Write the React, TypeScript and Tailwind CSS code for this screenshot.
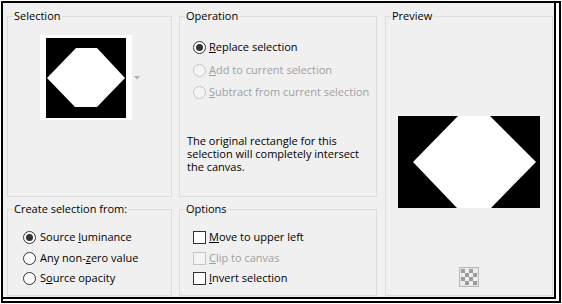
import React from "react";

function Group({
  label,
  className,
  children,
}: {
  label: string;
  className: string;
  children?: React.ReactNode;
}) {
  return (
    <div className={"relative border border-[#dcdcdc] " + className}>
      <span className="absolute left-[5px] top-[-8px] px-[1px] bg-[#f0f0f0] leading-[14px] text-black whitespace-nowrap">
        {label}
      </span>
      {children}
    </div>
  );
}

function Radio({ checked, disabled }: { checked?: boolean; disabled?: boolean }) {
  return (
    <span
      className={
        disabled
          ? "w-[13px] h-[13px] rounded-full border border-[#c4c4c4] bg-[#f4f4f4] shrink-0 flex items-center justify-center"
          : "w-[13px] h-[13px] rounded-full border border-[#333333] bg-white shrink-0 flex items-center justify-center"
      }
    >
      {checked && <span className="w-[7px] h-[7px] rounded-full bg-[#333333]" />}
    </span>
  );
}

function Check({ disabled }: { disabled?: boolean }) {
  return (
    <span
      className={
        disabled
          ? "w-[13px] h-[13px] border border-[#c4c4c4] bg-[#f4f4f4] shrink-0"
          : "w-[13px] h-[13px] border border-[#333333] bg-white shrink-0"
      }
    />
  );
}

export default function App() {
  return (
    <div
      className="w-[562px] h-[304px] bg-white pl-[1px] pt-[1px] text-[11px] text-black"
      style={{ fontFamily: '"Open Sans", "Noto Sans", sans-serif' }}
    >
      <div className="w-[560px] h-[302px] border-2 border-black">
        <div className="w-[553px] h-[296px] border-r-2 border-b-2 border-black bg-[#f0f0f0] flex pl-[4px] pt-[13px]">
          {/* Left column */}
          <div className="w-[165px] flex flex-col">
            <Group label="Selection" className="h-[181px] pl-[32px] pt-[18px]">
              <div className="flex items-center">
                <div className="w-[92px] h-[85px] bg-white pl-[6px] pt-[3px]">
                  <svg width="80" height="80" viewBox="0 0 80 80" className="block">
                    <rect width="80" height="80" fill="#000" />
                    <polygon points="1,40 30,10 51,10 79,40 51,69 29,69" fill="#fff" />
                  </svg>
                </div>
                <svg width="6" height="4" viewBox="0 0 6 4" className="ml-[2px] block">
                  <polygon points="0,0 6,0 3,3.5" fill="#b0b0b0" />
                </svg>
              </div>
            </Group>
            <Group label="Create selection from:" className="h-[87px] mt-[12px] pl-[15px] pt-[17px]">
              <div className="flex flex-col">
                <div className="h-[21px] flex items-center gap-[4px]">
                  <Radio checked />
                  <span>
                    Source <u>l</u>uminance
                  </span>
                </div>
                <div className="h-[20px] flex items-center gap-[4px]">
                  <Radio />
                  <span>
                    Any non-<u>z</u>ero value
                  </span>
                </div>
                <div className="h-[20px] flex items-center gap-[4px]">
                  <Radio />
                  <span>
                    S<u>o</u>urce opacity
                  </span>
                </div>
              </div>
            </Group>
          </div>

          {/* Middle column */}
          <div className="w-[198px] ml-[7px] flex flex-col">
            <Group label="Operation" className="h-[181px] pt-[19px]">
              <div className="flex flex-col pl-[13px]">
                <div className="h-[23px] flex items-center gap-[3px]">
                  <Radio checked />
                  <span>
                    <u>R</u>eplace selection
                  </span>
                </div>
                <div className="h-[22px] flex items-center gap-[3px] text-[#a0a0a0]">
                  <Radio disabled />
                  <span>
                    <u>A</u>dd to current selection
                  </span>
                </div>
                <div className="h-[22px] flex items-center gap-[3px] text-[#a0a0a0]">
                  <Radio disabled />
                  <span>
                    <u>S</u>ubtract from current selection
                  </span>
                </div>
              </div>
              <p className="mt-[31px] pl-[7px] leading-[13px] w-[190px]">
                The original rectangle for this
                <br />
                selection will completely intersect
                <br />
                the canvas.
              </p>
            </Group>
            <Group label="Options" className="h-[87px] mt-[12px] pl-[13px] pt-[17px]">
              <div className="flex flex-col">
                <div className="h-[21px] flex items-center gap-[3px]">
                  <Check />
                  <span>
                    <u>M</u>ove to upper left
                  </span>
                </div>
                <div className="h-[20px] flex items-center gap-[3px] text-[#a0a0a0]">
                  <Check disabled />
                  <span>
                    <u>C</u>lip to canvas
                  </span>
                </div>
                <div className="h-[20px] flex items-center gap-[3px]">
                  <Check />
                  <span>
                    <u>I</u>nvert selection
                  </span>
                </div>
              </div>
            </Group>
          </div>

          {/* Right column */}
          <div className="w-[168px] ml-[8px]">
            <Group label="Preview" className="h-[280px] pt-[99px] flex flex-col">
              <svg width="142" height="92" viewBox="0 0 142 92" className="block ml-[12px]">
                <rect width="142" height="92" fill="#000" />
                <polygon points="15,46 60,0 92,0 138,46 93,92 59,92" fill="#fff" />
              </svg>
              <svg width="20" height="20" viewBox="0 0 20 20" className="block self-center mt-[59px]">
                <rect x="0.5" y="0.5" width="19" height="19" fill="#e6e6e6" stroke="#b8b8b8" />
                <rect x="2" y="2" width="16" height="16" fill="#eeeeee" />
                <rect x="2" y="2" width="4" height="4" fill="#9c9c9c" />
                <rect x="10" y="2" width="4" height="4" fill="#9c9c9c" />
                <rect x="6" y="6" width="4" height="4" fill="#9c9c9c" />
                <rect x="14" y="6" width="4" height="4" fill="#9c9c9c" />
                <rect x="2" y="10" width="4" height="4" fill="#9c9c9c" />
                <rect x="10" y="10" width="4" height="4" fill="#9c9c9c" />
                <rect x="6" y="14" width="4" height="4" fill="#9c9c9c" />
                <rect x="14" y="14" width="4" height="4" fill="#9c9c9c" />
              </svg>
            </Group>
          </div>
        </div>
      </div>
    </div>
  );
}
